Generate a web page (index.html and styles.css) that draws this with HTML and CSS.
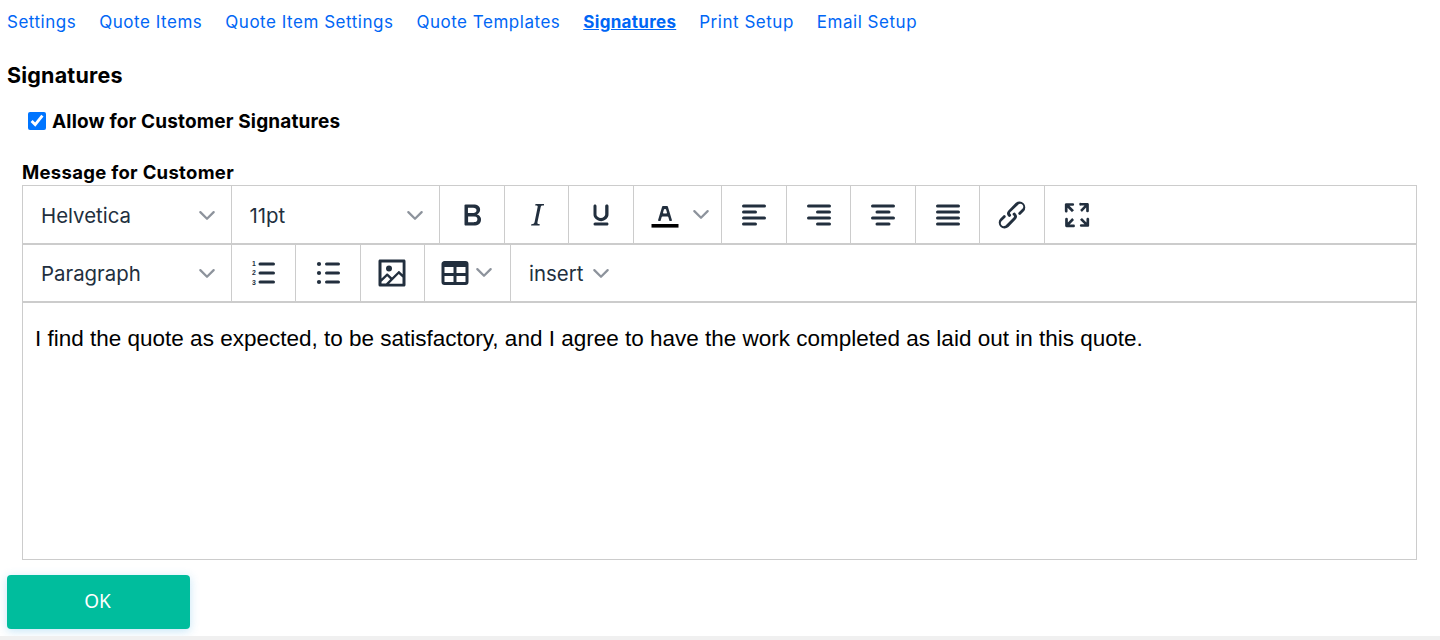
FILE: index.html
```html
<!DOCTYPE html>
<html lang="en">
<head>
    <meta charset="UTF-8">
    <title>Signatures</title>
    <link rel="stylesheet" href="styles.css">
</head>
<body>
    <nav class="tabs">
        <a href="#">Settings</a>
        <a href="#">Quote Items</a>
        <a href="#">Quote Item Settings</a>
        <a href="#">Quote Templates</a>
        <a href="#" class="active">Signatures</a>
        <a href="#">Print Setup</a>
        <a href="#">Email Setup</a>
    </nav>

    <h2 class="title">Signatures</h2>

    <label class="allow">
        <input type="checkbox" checked>
        <span>Allow for Customer Signatures</span>
    </label>

    <div class="field-label">Message for Customer</div>

    <div class="editor">
        <div class="toolbar first">
            <div class="cell select wide"><span>Helvetica</span><svg class="chev" viewBox="0 0 14 9"><path d="M1 1l6 6 6-6"/></svg></div>
            <div class="cell select size"><span>11pt</span><svg class="chev" viewBox="0 0 14 9"><path d="M1 1l6 6 6-6"/></svg></div>
            <div class="cell btn"><svg class="icon" viewBox="0 0 24 24"><path d="M7.8 19c-.3 0-.5 0-.6-.2l-.2-.5V5.7c0-.2 0-.4.2-.5l.6-.2h5c1.5 0 2.7.3 3.5 1 .7.6 1.1 1.4 1.1 2.5a3 3 0 01-.6 1.9c-.4.6-1 1-1.6 1.2.4.1.9.3 1.3.6s.8.7 1 1.2c.4.4.5 1 .5 1.6 0 1.3-.4 2.3-1.3 3-.8.7-2.1 1-3.8 1H7.8zm5-8.3c.6 0 1.2-.1 1.6-.5.4-.3.6-.7.6-1.3 0-1.1-.8-1.7-2.3-1.7H9.3v3.5h3.4zm.5 6c.7 0 1.3-.1 1.7-.4.4-.4.6-.9.6-1.5s-.2-1-.7-1.4c-.4-.3-1-.4-2-.4H9.4v3.8h4z"/></svg></div>
            <div class="cell btn"><svg class="icon" viewBox="0 0 24 24"><path d="M16.7 4.7l-.1.9h-.3c-.6 0-1 0-1.4.3-.3.3-.4.6-.5 1.1l-2.1 9.8v.6c0 .5.4.8 1.4.8h.2l-.2.8H8l.2-.8h.2c1.1 0 1.8-.5 2-1.5l2-9.8.1-.5c0-.6-.4-.8-1.4-.8h-.3l.2-.9h5.8z"/></svg></div>
            <div class="cell btn"><svg class="icon" viewBox="0 0 24 24"><path d="M16 5c.6 0 1 .4 1 1v5.5a4 4 0 01-.4 1.8l-1 1.4a5.3 5.3 0 01-5.5 1 5 5 0 01-1.6-1c-.5-.4-.8-.9-1.1-1.4a4 4 0 01-.4-1.8V6c0-.6.4-1 1-1s1 .4 1 1v5.5c0 .3 0 .6.2 1l.6.7a3.3 3.3 0 004.2 0l.6-.8c.2-.3.2-.6.2-1V6c0-.6.4-1 1-1zM8 17h8c.6 0 1 .4 1 1s-.4 1-1 1H8a1 1 0 010-2z"/></svg></div>
            <div class="cell split color"><svg class="icon" viewBox="0 0 24 24"><path class="black" d="M3 18h18v2.4H3z"/><path fill-rule="evenodd" d="M8.7 16h-.8a.5.5 0 01-.5-.6l2.7-9c.1-.3.3-.4.5-.4h2.8c.2 0 .4.1.5.4l2.7 9a.5.5 0 01-.5.6h-.8a.5.5 0 01-.4-.4l-.7-2.2c0-.3-.3-.4-.5-.4h-3.4c-.2 0-.4.1-.5.4l-.7 2.2c0 .3-.2.4-.4.4zm2.6-7.6l-.6 2a.5.5 0 00.5.6h1.6a.5.5 0 00.5-.6l-.6-2c0-.3-.3-.4-.5-.4h-.4c-.2 0-.4.1-.5.4z"/></svg><svg class="chev" viewBox="0 0 14 9"><path d="M1 1l6 6 6-6"/></svg></div>
            <div class="cell btn"><svg class="icon" viewBox="0 0 24 24"><path d="M5 5h14a1 1 0 010 2H5a1 1 0 010-2zm0 4h8a1 1 0 010 2H5a1 1 0 010-2zm0 8h8a1 1 0 010 2H5a1 1 0 010-2zm0-4h14a1 1 0 010 2H5a1 1 0 010-2z"/></svg></div>
            <div class="cell btn"><svg class="icon" viewBox="0 0 24 24"><path d="M5 5h14a1 1 0 010 2H5a1 1 0 010-2zm6 4h8a1 1 0 010 2h-8a1 1 0 010-2zm0 8h8a1 1 0 010 2h-8a1 1 0 010-2zm-6-4h14a1 1 0 010 2H5a1 1 0 010-2z"/></svg></div>
            <div class="cell btn"><svg class="icon" viewBox="0 0 24 24"><path d="M5 5h14a1 1 0 010 2H5a1 1 0 010-2zm3 4h8a1 1 0 010 2H8a1 1 0 010-2zm0 8h8a1 1 0 010 2H8a1 1 0 010-2zm-3-4h14a1 1 0 010 2H5a1 1 0 010-2z"/></svg></div>
            <div class="cell btn"><svg class="icon" viewBox="0 0 24 24"><path d="M5 5h14a1 1 0 010 2H5a1 1 0 010-2zm0 4h14a1 1 0 010 2H5a1 1 0 010-2zm0 4h14a1 1 0 010 2H5a1 1 0 010-2zm0 4h14a1 1 0 010 2H5a1 1 0 010-2z"/></svg></div>
            <div class="cell btn"><svg class="icon" viewBox="0 0 24 24"><path d="M6.2 12.3a1 1 0 011.4 1.4l-2.1 2a2 2 0 102.7 2.8l4.8-4.8a1 1 0 000-1.4 1 1 0 111.4-1.3 2.9 2.9 0 010 4L9.6 20a3.9 3.9 0 01-5.5-5.5l2-2zm11.6-.6a1 1 0 01-1.4-1.4l2-2a2 2 0 10-2.6-2.8L11 10a1 1 0 000 1.4A1 1 0 119.6 13a2.9 2.9 0 010-4L14.4 4a3.9 3.9 0 015.5 5.5l-2 2z"/></svg></div>
            <div class="cell btn last"><svg class="icon" viewBox="0 0 24 24"><path d="M15.3 10l-1.2-1.3 2.9-3h-2.3a.9.9 0 110-1.7H19c.5 0 .9.4.9.9v4.4a.9.9 0 11-1.8 0V7l-2.9 3zm0 4l3 3v-2.3c0-.5.4-.9.9-.9s.9.4.9.9V19c0 .5-.4.9-.9.9h-4.4a.9.9 0 110-1.8H17l-3-2.9 1.3-1.2zM10 15.4l-2.9 3h2.3a.9.9 0 110 1.7H5a.9.9 0 01-.9-.9v-4.4a.9.9 0 111.8 0V17l2.9-3 1.2 1.3zm-1.3-5.3l-3-3v2.4c0 .5-.4.9-.9.9a.9.9 0 01-.9-.9V5c0-.5.4-.9.9-.9h4.4a.9.9 0 110 1.8H7l3 2.9L8.7 10z"/></svg></div>
        </div>
        <div class="toolbar">
            <div class="cell select wide"><span>Paragraph</span><svg class="chev" viewBox="0 0 14 9"><path d="M1 1l6 6 6-6"/></svg></div>
            <div class="cell btn"><svg class="icon" viewBox="0 0 24 24"><path d="M10 5h9a1 1 0 010 2h-9a1 1 0 010-2zm0 6h9a1 1 0 010 2h-9a1 1 0 010-2zm0 6h9a1 1 0 010 2h-9a1 1 0 010-2z"/><text x="4.6" y="7.4" class="digit">1</text><text x="4.6" y="13.6" class="digit">2</text><text x="4.6" y="19.8" class="digit">3</text></svg></div>
            <div class="cell btn"><svg class="icon" viewBox="0 0 24 24"><path d="M11 5h8a1 1 0 010 2h-8a1 1 0 010-2zm0 6h8a1 1 0 010 2h-8a1 1 0 010-2zm0 6h8a1 1 0 010 2h-8a1 1 0 010-2z"/><circle cx="6" cy="6" r="1.4"/><circle cx="6" cy="12" r="1.4"/><circle cx="6" cy="18" r="1.4"/></svg></div>
            <div class="cell btn"><svg class="icon" viewBox="0 0 24 24"><path d="M5 15.7l3.3-3.2c.3-.3.7-.3 1 0L12 15l4.1-4c.3-.4.8-.4 1 0l2 1.9V5H5v10.7zM5 18V19h3l2.8-2.9-2-2L5 17.9zm14-3l-2.5-2.4-6.4 6.5H19v-4zM4 3h16c.6 0 1 .4 1 1v16c0 .6-.4 1-1 1H4a1 1 0 01-1-1V4c0-.6.4-1 1-1zm6 8a2 2 0 100-4 2 2 0 000 4z"/></svg></div>
            <div class="cell split table"><svg class="icon" viewBox="0 0 24 24"><path fill-rule="evenodd" d="M19 4a2 2 0 012 2v12a2 2 0 01-2 2H5a2 2 0 01-2-2V6c0-1.1.9-2 2-2h14zm0 10h-6v4h6v-4zm-8 0H5v4h6v-4zm8-6h-6v4h6V8zm-8 0H5v4h6V8z"/></svg><svg class="chev" viewBox="0 0 14 9"><path d="M1 1l6 6 6-6"/></svg></div>
            <div class="cell select insert last"><span>insert</span><svg class="chev" viewBox="0 0 14 9"><path d="M1 1l6 6 6-6"/></svg></div>
        </div>
        <div class="content">
            <p>I find the quote as expected, to be satisfactory, and I agree to have the work completed as laid out in this quote.</p>
        </div>
    </div>

    <button class="ok" type="button">OK</button>
    <div class="strip"></div>
</body>
</html>
```

FILE: styles.css
```css
html, body {
    height: 640px;
    overflow: hidden;
}
body {
    margin: 0;
    position: relative;
    font-family: Inter, "Liberation Sans", sans-serif;
    color: #000;
    background: #fff;
}
.tabs {
    display: flex;
    gap: 23px;
    padding: 12px 0 0 7px;
    height: 20px;
    line-height: 20px;
}
.tabs a {
    color: #0066f5;
    font-size: 17px;
    letter-spacing: 0.52px;
    text-decoration: none;
}
.tabs a.active {
    font-weight: 700;
    letter-spacing: 0.3px;
    text-decoration: underline;
}
.title {
    margin: 30px 0 0 7px;
    height: 26px;
    line-height: 26px;
    font-size: 21.5px;
    font-weight: 700;
    letter-spacing: 0.2px;
}
.allow {
    display: flex;
    align-items: center;
    gap: 6px;
    margin: 22px 0 0 28px;
    height: 22px;
    font-size: 19px;
    font-weight: 700;
    letter-spacing: 0.15px;
}
.allow input {
    width: 18px;
    height: 18px;
    margin: 0;
    accent-color: #0075ff;
}
.field-label {
    margin: 29px 0 0 22px;
    height: 22px;
    line-height: 22px;
    font-size: 18.5px;
    font-weight: 700;
    letter-spacing: 0.3px;
}
.editor {
    box-sizing: border-box;
    width: 1395px;
    height: 375px;
    margin: 2px 0 0 22px;
    border: 1px solid #ccc;
    color: #222f3e;
}
.toolbar {
    display: flex;
    height: 56.5px;
    border-bottom: 2px solid #ccc;
}
.cell {
    box-sizing: border-box;
    display: flex;
    align-items: center;
    border-right: 1px solid #ccc;
    font-size: 20.4px;
}
.first .cell {
    padding-top: 1px;
}
.cell.last {
    border-right: 0;
}
.select {
    justify-content: space-between;
    padding: 2px 16px 0 18px;
}
.first .select {
    padding-top: 3px;
}
.wide {
    width: 208.5px;
}
.size {
    width: 208.9px;
}
.insert {
    width: auto;
    gap: 10px;
}
.btn {
    width: 64.5px;
    justify-content: center;
}
.split {
    padding-left: 13px;
    gap: 10px;
}
.color {
    width: 88.5px;
}
.table {
    width: 86px;
    gap: 3px;
    padding-left: 12px;
}
.icon {
    display: block;
    flex-shrink: 0;
    width: 36px;
    height: 36px;
    fill: #222f3e;
}
.icon .black {
    fill: #000;
}
.digit {
    font-family: "Liberation Sans", sans-serif;
    font-size: 4.6px;
    font-weight: 700;
}
.chev {
    display: block;
    flex-shrink: 0;
    width: 16px;
    height: 10px;
    fill: none;
    stroke: #8d939c;
    stroke-width: 2;
    stroke-linecap: round;
    stroke-linejoin: round;
}
.content {
    padding: 23px 12px 0;
    color: #000;
    font-family: "Liberation Sans", sans-serif;
    font-size: 22.5px;
    line-height: 26px;
}
.content p {
    margin: 0;
}
.ok {
    display: block;
    width: 183px;
    height: 54px;
    margin: 15px 0 0 7px;
    padding: 0 2px 2px 0;
    border: 0;
    border-radius: 4px;
    background: #00bd9d;
    box-shadow: 0 2px 10px rgba(60, 170, 230, 0.3);
    color: #fff;
    font-family: "Noto Sans", sans-serif;
    font-size: 19px;
}
.strip {
    position: absolute;
    left: 0;
    right: 0;
    bottom: 0;
    height: 4px;
    background: #f0f0f0;
}
```
